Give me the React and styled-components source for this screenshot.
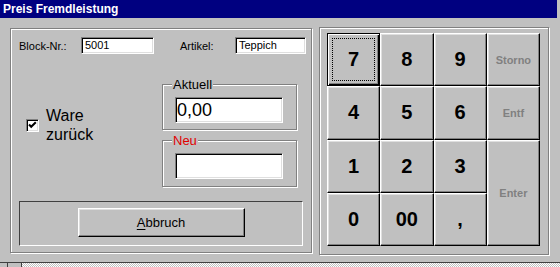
import React from "react";
import styled, { createGlobalStyle, css } from "styled-components";

const Global = createGlobalStyle`
  html, body { margin: 0; padding: 0; background: #c0c0c0; overflow: hidden; }
  * { box-sizing: border-box; }
`;

const etched = css`
  border: 1px solid #808080;
  box-shadow: inset 1px 1px 0 #fff, 1px 1px 0 #fff;
`;

const sunkenField = css`
  background: #fff;
  border: 1px solid;
  border-color: #808080 #fff #fff #808080;
  box-shadow: inset 1px 1px 0 #000, inset -1px -1px 0 #dfdfdf;
`;

const raised = css`
  background: #c0c0c0;
  border: 1px solid;
  border-color: #fff #000 #000 #fff;
  box-shadow: inset -1px -1px 0 #808080, inset 1px 1px 0 #dfdfdf;
`;

const Window = styled.div`
  width: 560px;
  height: 267px;
  display: flex;
  flex-direction: column;
  background: #c0c0c0;
  font-family: "Liberation Sans", Arial, sans-serif;
  color: #000;
`;

const TitleBar = styled.div`
  width: 557px;
  height: 18px;
  flex: none;
  background: #000080;
  color: #fff;
  font-weight: bold;
  font-size: 12px;
  line-height: 18px;
  padding-left: 3px;
`;

const Body = styled.div`
  flex: 1;
  display: flex;
  align-items: flex-start;
  gap: 7px;
  padding: 9px 0 0 10px;
`;

const LeftGroup = styled.div`
  ${etched};
  width: 302px;
  height: 225px;
  margin-top: 1px;
  padding: 8px 8px 6px 8px;
  display: flex;
  flex-direction: column;
`;

const FieldRow = styled.div`
  display: flex;
  align-items: center;
  height: 17px;
  font-size: 11px;
`;

const Label = styled.span`
  width: ${(p) => p.$w}px;
  flex: none;
`;

const TextBox = styled.div`
  ${sunkenField};
  width: ${(p) => p.$w}px;
  height: ${(p) => p.$h || 17}px;
  font-size: ${(p) => p.$fs || 11}px;
  line-height: ${(p) => (p.$h || 17) - 2}px;
  padding-left: 3px;
  flex: none;
`;

const Middle = styled.div`
  display: flex;
  margin-top: 30px;
`;

const CheckArea = styled.label`
  flex: 1;
  align-self: flex-start;
  margin-top: 22px;
  padding-left: 7px;
  display: flex;
  align-items: center;
  gap: 7px;
  font-size: 16px;
  line-height: 19px;
`;

const CheckBox = styled.span`
  ${sunkenField};
  width: 13px;
  height: 13px;
  display: flex;
  align-items: center;
  justify-content: center;
  flex: none;
`;

const Groups = styled.div`
  width: 135px;
  margin-right: 6px;
  display: flex;
  flex-direction: column;
  gap: 10px;
`;

const Frame = styled.div`
  ${etched};
  height: ${(p) => p.$h}px;
  padding: 0 0 0 12px;
`;

const Legend = styled.div`
  width: fit-content;
  margin: -8px 0 0 -3px;
  padding: 0 1px;
  background: #c0c0c0;
  font-size: 13px;
  line-height: 15px;
  color: ${(p) => p.$color || "#000"};
`;

const ValueBox = styled(TextBox)`
  margin-top: 5px;
  padding-left: 1px;
`;

const ButtonPanel = styled.div`
  margin-top: 14px;
  height: 45px;
  border: 1px solid;
  border-color: #404040 #fff #fff #404040;
  display: flex;
  align-items: center;
  justify-content: center;
  padding-bottom: 2px;
`;

const PushButton = styled.button`
  ${raised};
  width: 167px;
  height: 29px;
  font-family: inherit;
  font-size: 13px;
  color: #000;
  padding: 0;
  & u { text-decoration: underline; text-underline-offset: 2px; }
`;

const KeypadGroup = styled.div`
  ${etched};
  width: 230px;
  height: 228px;
  padding: 5px 0 0 7px;
`;

const Keypad = styled.div`
  display: grid;
  grid-template-columns: repeat(4, 53.25px);
  grid-template-rows: repeat(4, 53.25px);
`;

const Key = styled.button`
  ${raised};
  position: relative;
  padding: 0;
  font-family: inherit;
  font-weight: bold;
  font-size: ${(p) => (p.$small ? 11 : 20)}px;
  color: ${(p) => (p.$disabled ? "#808080" : "#000")};
  grid-row: ${(p) => p.$row || "auto"};
  ${(p) =>
    p.$focused &&
    css`
      border-color: #000;
      box-shadow: inset 1px 1px 0 #fff, inset -1px -1px 0 #000,
        inset -2px -2px 0 #808080;
      outline: 1px dotted #000;
      outline-offset: -6px;
    `}
`;

const StatusStrip = styled.div`
  height: 5px;
  flex: none;
  display: flex;
  border-top: 1px solid #404040;
  background: repeating-conic-gradient(#c0c0c0 0 25%, #fff 0 50%) 0 0 / 2px 2px;
`;

const StripCell = styled.div`
  width: ${(p) => p.$w}px;
  background: #c0c0c0;
  border-right: 1px solid #404040;
  flex: none;
`;

const keys = [
  { t: "7", focused: true },
  { t: "8" },
  { t: "9" },
  { t: "Storno", small: true, disabled: true },
  { t: "4" },
  { t: "5" },
  { t: "6" },
  { t: "Entf", small: true, disabled: true },
  { t: "1" },
  { t: "2" },
  { t: "3" },
  { t: "Enter", small: true, disabled: true, row: "span 2" },
  { t: "0" },
  { t: "00" },
  { t: "," },
];

export default function App() {
  return (
    <>
      <Global />
      <Window>
        <TitleBar>Preis Fremdleistung</TitleBar>
        <Body>
          <LeftGroup>
            <FieldRow>
              <Label $w={62}>Block-Nr.:</Label>
              <TextBox $w={73}>5001</TextBox>
              <Label $w={55} style={{ marginLeft: 26 }}>Artikel:</Label>
              <TextBox $w={71}>Teppich</TextBox>
            </FieldRow>
            <Middle>
              <CheckArea>
                <CheckBox>
                  <svg width="9" height="9" viewBox="0 0 9 9">
                    <path d="M1 3.5 L3.2 5.8 L7.8 1.2" stroke="#000" strokeWidth="2" fill="none" />
                  </svg>
                </CheckBox>
                <span>
                  Ware
                  <br />
                  zurück
                </span>
              </CheckArea>
              <Groups>
                <Frame $h={46}>
                  <Legend>Aktuell</Legend>
                  <ValueBox $w={108} $h={26} $fs={18}>0,00</ValueBox>
                </Frame>
                <Frame $h={47}>
                  <Legend $color="#e00000">Neu</Legend>
                  <ValueBox $w={108} $h={26} $fs={18}></ValueBox>
                </Frame>
              </Groups>
            </Middle>
            <ButtonPanel>
              <PushButton>
                <u>A</u>bbruch
              </PushButton>
            </ButtonPanel>
          </LeftGroup>
          <KeypadGroup>
            <Keypad>
              {keys.map((k) => (
                <Key
                  key={k.t}
                  $small={k.small}
                  $disabled={k.disabled}
                  $focused={k.focused}
                  $row={k.row}
                >
                  {k.t}
                </Key>
              ))}
            </Keypad>
          </KeypadGroup>
        </Body>
        <StatusStrip>
          <StripCell $w={8} />
          <StripCell $w={14} />
        </StatusStrip>
      </Window>
    </>
  );
}
